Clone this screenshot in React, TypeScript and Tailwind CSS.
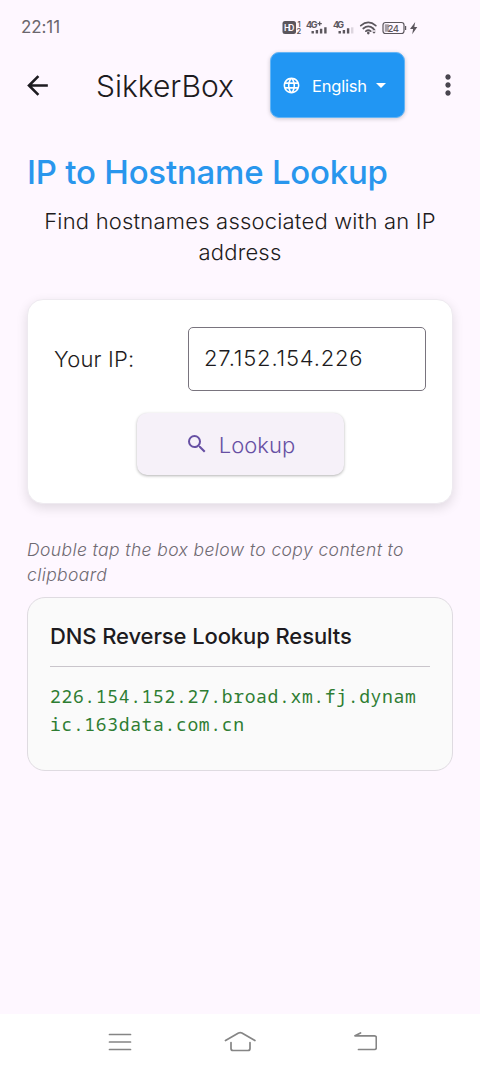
import type { ReactNode } from "react";
import { MdArrowBack, MdArrowDropDown, MdLanguage, MdMoreVert, MdSearch } from "react-icons/md";

function StatusIcons() {
  return (
    <svg width="138" height="18" viewBox="0 0 138 18" className="text-[#5b565d]" fill="currentColor">
      <rect x="0.500" y="2" width="13.500" height="13" rx="2.5" />
      <text x="2" y="12" fontSize="8.500" fontWeight="600" fill="#fef7ff" textLength="10.500">HD</text>
      <text x="15.500" y="7.500" fontSize="7.500" fontWeight="600">1</text>
      <text x="14.500" y="15" fontSize="7.500" fontWeight="600">2</text>
      <text x="24" y="8.500" fontSize="9" fontWeight="700" textLength="11.500">4G</text>
      <path d="M35.500 4h1.500V2.500h1.300V4h1.500v1.300h-1.500v1.500H37V5.300h-1.500z" />
      <path d="M29.500 12h2.400v2.500h-2.400zM33.700 11h2.400v3.500h-2.400zM37.900 9.800h2.400v4.700h-2.400zM42.200 8.300h2.400v6.200h-2.400z" />
      <text x="51" y="8.500" fontSize="9" fontWeight="700" textLength="11">4G</text>
      <path d="M56.500 12h2.400v2.500h-2.400zM60.700 11h2.400v3.500h-2.400zM64.900 9.300h2.400v5.200h-2.400z" />
      <path d="M69 8.300h2.400v6.200H69z" opacity=".2" />
      <g fill="none" stroke="currentColor" strokeWidth="1.7" strokeLinecap="round">
        <path d="M78.800 6.700q7.500-6.500 15 0M81.300 9.500q5-4.300 10 0M83.900 12.200q2.400-1.900 4.800 0" />
      </g>
      <circle cx="86.300" cy="14.100" r="1.300" />
      <path d="M92 9.200l1.800 2h-3.600zM92 14.700l1.800-2h-3.600z" />
      <rect x="101" y="3.500" width="21" height="11" rx="2.500" fill="none" stroke="currentColor" strokeWidth="1.200" />
      <path d="M123 6.900h1.200v4.200H123z" />
      <rect x="102.800" y="5.300" width="4" height="7.400" opacity=".55" />
      <text x="105.500" y="12.500" fontSize="9.500" fontWeight="500" textLength="11.500">24</text>
      <path d="M133.200 3l-5.200 7h3.100l-.9 5.200 5.100-7.200h-3z" />
    </svg>
  );
}

function NavButton({ label, children }: { label: string; children: ReactNode }) {
  return (
    <button aria-label={label} className="flex w-10 justify-center">
      <svg width="34" height="28" viewBox="0 0 34 28" fill="none" stroke="#858585" strokeWidth="1.7" strokeLinecap="round" strokeLinejoin="round">
        {children}
      </svg>
    </button>
  );
}

export default function App() {
  return (
    <div className="flex h-[1070px] w-[480px] flex-col bg-[#fef7ff] font-['Inter',sans-serif] text-[#1d1b20]">
      <header>
        <div className="flex h-[52px] items-center justify-between pt-[3px] pr-[60px] pl-[21px]">
          <span className="text-[17px] tracking-[-0.1px] text-[#6b666d]">22:11</span>
          <StatusIcons />
        </div>
        <div className="flex h-[66px] items-center">
          <button aria-label="Back" className="ml-[22px]">
            <MdArrowBack size={31} />
          </button>
          <h1 className="ml-[43px] w-[174px] pt-px text-[30px] leading-9 font-[350]">SikkerBox</h1>
          <button className="flex h-[66px] w-[135px] items-center rounded-[9px] border border-[#64b5f6] bg-[#2196f3] pl-[11px] text-white shadow-[0_1px_4px_rgba(0,0,0,0.2)]">
            <MdLanguage size={19} />
            <span className="ml-[9px] w-[59px] pt-[2px] text-[16.5px] tracking-[-0.2px] whitespace-nowrap">English</span>
            <MdArrowDropDown size={24} />
          </button>
          <button aria-label="More options" className="ml-[27px] text-[#49454f]">
            <MdMoreVert size={32} />
          </button>
        </div>
      </header>

      <main className="flex-1 px-[27px] pt-[34px]">
        <h2 className="text-[33px] leading-10 font-medium tracking-[-0.22px] whitespace-nowrap text-[#2996ed]">IP to Hostname Lookup</h2>
        <p className="-mx-1 mt-[14px] text-center text-[22px] leading-[31px] font-[350] tracking-[0.2px]">
          Find hostnames associated with an IP
          <br />
          address
        </p>

        <section className="mt-[31px] h-[205px] rounded-2xl border border-[#eeeaf0] bg-white px-[26px] pt-[26px] shadow-[0_4px_12px_rgba(0,0,0,0.12)]">
          <div className="flex items-center justify-between pt-px">
            <label htmlFor="ip" className="text-[22px] font-[350] tracking-[0.2px]">Your IP:</label>
            <input id="ip" defaultValue="27.152.154.226" className="h-16 w-[238px] rounded-[5px] border border-[#79747e] px-[15px] pb-0.5 text-[22px] font-[350] tracking-[0.8px] outline-none" />
          </div>
          <button className="mx-auto mt-[22px] flex h-[62px] w-[207px] items-center justify-center rounded-[10px] bg-[#f6f1f9] text-[#6750a4] shadow-[0_1px_3px_rgba(0,0,0,0.3)]">
            <MdSearch size={24} />
            <span className="ml-[10px] pt-0.5 text-[22px] font-[350]">Lookup</span>
          </button>
        </section>

        <p className="mt-[33px] text-[17.5px] leading-[25px] font-[350] tracking-[0.4px] whitespace-nowrap text-[#6f6a72] italic">
          Double tap the box below to copy content to
          <br />
          clipboard
        </p>

        <section className="mt-[10px] h-[174px] rounded-[18px] border border-[#dfdbe1] bg-[#fafafa] px-[22px] pt-[22px]">
          <h3 className="h-[47px] border-b border-[#c9c5cb] text-[22px] leading-8 font-medium tracking-[-0.1px]">DNS Reverse Lookup Results</h3>
          <p className="mt-[15px] font-['Noto_Sans_Mono','DejaVu_Sans_Mono',monospace] text-[18px] leading-7 tracking-[0.65px] whitespace-nowrap text-[#2e7d32]">
            226.154.152.27.broad.xm.fj.dynam
            <br />
            ic.163data.com.cn
          </p>
        </section>
      </main>

      <nav className="flex h-14 items-center justify-between bg-white px-[100px]">
        <NavButton label="Recent apps">
          <path d="M6.5 6.5h21M6.5 14h21M6.5 21.5h21" />
        </NavButton>
        <NavButton label="Home">
          <path d="M2.5 12.5L15.500 5q1.700-.8 3.400 0l13 7.500M8 14.500v6q0 2 2 2h15q2 0 2-2v-6" />
        </NavButton>
        <NavButton label="Back">
          <path d="M17.500 5l-5.500 2.800H31.500q1.800 0 1.800 1.800v10.100q0 1.800-1.800 1.800H15.500" />
        </NavButton>
      </nav>
    </div>
  );
}
